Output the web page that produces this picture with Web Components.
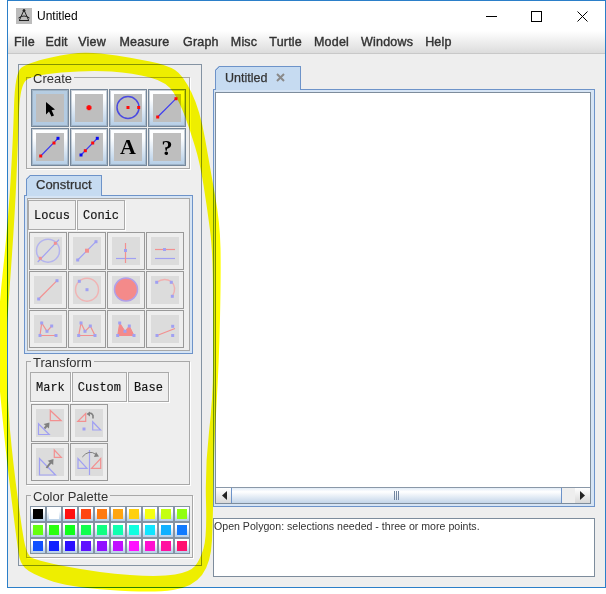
<!DOCTYPE html>
<html>
<head>
<meta charset="utf-8">
<title>Untitled</title>
<style>
  html, body { margin: 0; background: #fff; }
  body { width: 606px; height: 594px; overflow: hidden; position: relative; font-family: "Liberation Sans", Arial, sans-serif; }
</style>
</head>
<body>
<sketch-window>
  <title-bar slot="title" label="Untitled"></title-bar>
  <menu-bar slot="menu" items="File,Edit,View,Measure,Graph,Misc,Turtle,Model,Windows,Help"></menu-bar>

  <tool-panel slot="tools">
    <tool-group label="Create" style="width:164px;margin-top:12px">
      <tool-grid icons="arrow,point,circle,segment,ray,line,text,help" active="0"></tool-grid>
    </tool-group>

    <tab-pane label="Construct" style="margin-top:6px">
      <text-buttons items="Locus,Conic"></text-buttons>
      <tool-grid dim style="margin:2px 0 0 1px" icons="intersect,midpoint,perp,parallel,seg2,circlePt,disk,arc,openPoly,closedPoly,filledPoly,bisector"></tool-grid>
    </tab-pane>

    <tool-group label="Transform" style="width:164px;margin-top:7px" tight>
      <text-buttons items="Mark,Custom,Base"></text-buttons>
      <tool-grid dim style="margin:2px 0 0 1px" icons="translate,rotate,dilate,reflect" cols="2"></tool-grid>
    </tool-group>

    <tool-group label="Color Palette" style="width:167px;margin-top:10px" tight>
      <color-palette></color-palette>
    </tool-group>
  </tool-panel>

  <doc-area slot="doc" label="Untitled"></doc-area>
  <message-box slot="doc">Open Polygon: selections needed - three or more points.</message-box>
</sketch-window>
<yellow-scribble></yellow-scribble>

<script>
const BLUE = "#3c3cf0", RED = "#ff0a0a";
const LB = "#a0a0f2", PK = "#f29090";

const sq = (x, y, c, s = 3) => `<rect x="${x - s / 2}" y="${y - s / 2}" width="${s}" height="${s}" fill="${c}"/>`;
const ln = (x1, y1, x2, y2, c, w = 1.2) => `<line x1="${x1}" y1="${y1}" x2="${x2}" y2="${y2}" stroke="${c}" stroke-width="${w}"/>`;
const poly = (pts, c, w = 1.2, fill = "none") => `<polygon points="${pts}" fill="${fill}" stroke="${c}" stroke-width="${w}"/>`;
const open = (pts, c, w = 1.2) => `<polyline points="${pts}" fill="none" stroke="${c}" stroke-width="${w}"/>`;
const dots = (pts) => pts.map(p => sq(p[0], p[1], LB)).join("");
const moveArrow = (x1, y1, x2, y2) => {
  // thick grey arrow used by the transform tools
  const a = Math.atan2(y2 - y1, x2 - x1), h = 4;
  const p = (d, s) => `${x2 + Math.cos(a) * d - Math.sin(a) * s},${y2 + Math.sin(a) * d + Math.cos(a) * s}`;
  return ln(x1, y1, x2 - Math.cos(a) * 3, y2 - Math.sin(a) * 3, "#808080", 2) +
    `<polygon points="${p(0, 0)} ${p(-h - 1, h - 0.5)} ${p(-h - 1, -h + 0.5)}" fill="#808080"/>`;
};
const glyph = (t, y) => `<text x="14" y="${y}" text-anchor="middle" font-family="Liberation Serif, serif" font-weight="700" font-size="22" fill="#000">${t}</text>`;

const ICONS = {
  arrow: `<polygon points="10,8 10,20.5 13,17.5 15.5,22.5 18,21.5 15.6,16.2 19,15.6" fill="#000"/>`,
  point: `<rect x="11.5" y="12.2" width="5" height="3" fill="${RED}"/><rect x="12.5" y="11.2" width="3" height="5" fill="${RED}"/>`,
  circle: `<circle cx="14" cy="13.5" r="11" fill="none" stroke="#4a4ae0" stroke-width="1.5"/>` + sq(14, 13.5, RED, 3) + sq(24.7, 13.5, RED, 3),
  segment: ln(4.7, 23, 23, 4.7, BLUE) + sq(4.7, 23, RED) + sq(23, 4.7, RED),
  ray: ln(4.7, 23, 22, 5.3, BLUE) + sq(4.7, 23, RED) + sq(18, 10, RED) + sq(22, 5.3, "#0a0af0"),
  line: ln(6, 22, 22.3, 5.3, BLUE) + sq(6, 22, "#0a0af0") + sq(10.3, 17.7, RED) + sq(17.7, 10, RED) + sq(22.3, 5.3, "#0a0af0"),
  text: glyph("A", 21),
  help: glyph("?", 21.5),

  intersect: `<circle cx="14" cy="13.7" r="11.5" fill="none" stroke="#b4b4ee" stroke-width="1.5"/>` + ln(3.7, 25, 25, 2.7, LB) + sq(21.3, 6.3, PK) + sq(6.3, 21.3, PK),
  midpoint: ln(4.7, 23, 23, 4.7, LB) + dots([[4.7, 23], [23, 4.7]]) + sq(14, 13.7, PK, 4),
  perp: ln(4, 21.5, 24, 21.5, LB) + ln(13.5, 6, 13.5, 26, PK) + sq(13.5, 13.5, LB),
  parallel: ln(4, 12.5, 24, 12.5, PK) + ln(4, 21.5, 24, 21.5, LB) + sq(13.5, 12.5, LB),
  seg2: ln(4.7, 23, 23, 4.7, PK) + dots([[4.7, 23], [23, 4.7]]),
  circlePt: `<circle cx="14" cy="13.7" r="11.5" fill="none" stroke="#f0b4b4" stroke-width="1.5"/>` + dots([[14, 13.7], [6.3, 5.3]]),
  disk: `<circle cx="14" cy="13.5" r="11.5" fill="#f48a8a" stroke="#b0a0ea" stroke-width="1.5"/>`,
  arc: `<path d="M5.7 6.3Q13 1 20.3 5.5Q26.5 11.5 21.3 20.3" fill="none" stroke="#f0b0b0" stroke-width="1.4"/>` + dots([[5.7, 6.3], [20.3, 6.3], [21.3, 20.3]]),
  openPoly: open("22,20.5 6,20.5 7.7,8 13,16.3 17.7,11", PK) + dots([[6, 20.5], [22, 20.5], [7.7, 8], [13, 16.3], [17.7, 11]]),
  closedPoly: poly("5.7,20.5 8,8 12,16.3 17.3,11 22,20.5", PK) + dots([[5.7, 20.5], [22, 20.5], [8, 8], [12, 16.3], [17.3, 11]]),
  filledPoly: poly("5.7,20.5 7.7,8 13,16.3 17.3,11 22,20.5", "#f48a8a", 1, "#f48a8a") + dots([[5.7, 20.5], [22, 20.5], [7.7, 8], [13, 16.3], [17.3, 11]]),
  bisector: ln(6, 20.5, 24, 13.5, PK) + dots([[6, 20.5], [21.7, 20.5], [21.7, 11.3]]),

  translate: poly("14.3,1.5 14.3,11.7 25.2,11.7", PK) + poly("2.5,14.8 2.5,25.5 13.2,25.5", LB) + moveArrow(8.5, 19.5, 13.5, 13.5),
  rotate: poly("10.7,4.5 10.7,12.3 2.8,12.3", PK) + poly("17.7,12.8 17.7,21 25.6,21", LB) + sq(9, 20, LB) +
    `<path d="M13 5Q16.5 3 18 6.5L18 9.5" fill="none" stroke="#808080" stroke-width="1.6"/><polygon points="11.5,5 15,2.5 15,7.5" fill="#808080"/>`,
  dilate: poly("18.3,2 18.3,9.3 25.3,9.3", PK) + poly("3.5,10.5 3.5,27 19.5,27", LB) + moveArrow(10.5, 20, 17.5, 11),
  reflect: ln(14.5, 2, 14.5, 27, LB) + poly("3,10.5 3,20.3 12,20.3", LB) + poly("25.7,10.5 25.7,20.3 16.5,20.3", PK) +
    `<path d="M7.3 9Q14 1 21 6.5" fill="none" stroke="#808080" stroke-width="1"/><polygon points="24,8.5 19,9 21,4" fill="#808080"/>`
};

class SketchWindow extends HTMLElement {
  constructor() {
    super();
    this.attachShadow({ mode: "open" }).innerHTML = `
      <style>
        :host {
          display: flex;
          flex-direction: column;
          box-sizing: border-box;
          width: 599px;
          height: 588px;
          margin-left: 7px;
          border: 1px solid #2b7fc9;
          background: #eee;
        }
        .body { flex: 1; display: flex; gap: 11px; padding: 10px 0 0 10px; min-height: 0; }
        .doc { display: flex; flex-direction: column; padding-top: 2px; }
      </style>
      <slot name="title"></slot>
      <slot name="menu"></slot>
      <div class="body">
        <slot name="tools"></slot>
        <div class="doc"><slot name="doc"></slot></div>
      </div>`;
  }
}

class TitleBar extends HTMLElement {
  constructor() {
    super();
    this.attachShadow({ mode: "open" });
  }
  connectedCallback() {
    this.shadowRoot.innerHTML = `
      <style>
        :host { display: flex; align-items: center; height: 30px; background: #fff; padding-left: 8px; }
        .icon { width: 16px; height: 16px; background: #bcbcbc; display: block; }
        .text { font-size: 12px; color: #000; margin-left: 5px; flex: 1; }
        .ctrl { width: 45.5px; height: 30px; display: flex; align-items: center; justify-content: center; }
      </style>
      <svg class="icon" viewBox="0 0 16 16" fill="none" stroke="#222" stroke-width="1">
        <path d="M8 2L3.5 12M8 2L12.5 12M2.5 10Q8 6 13.5 10M3 12.5L13 12.5"/><circle cx="8" cy="2.5" r="1" fill="#222"/>
      </svg>
      <span class="text">${this.getAttribute("label")}</span>
      <span class="ctrl"><svg width="11" height="11" viewBox="0 0 11 11"><path d="M0 5.5H11" stroke="#000"/></svg></span>
      <span class="ctrl"><svg width="11" height="11" viewBox="0 0 11 11"><rect x=".5" y=".5" width="10" height="10" fill="none" stroke="#000"/></svg></span>
      <span class="ctrl"><svg width="11" height="11" viewBox="0 0 11 11"><path d="M.5 .5L10.5 10.5M10.5 .5L.5 10.5" stroke="#000"/></svg></span>`;
  }
}

class MenuBar extends HTMLElement {
  constructor() {
    super();
    this.attachShadow({ mode: "open" });
  }
  connectedCallback() {
    const items = this.getAttribute("items").split(",");
    // small nudges: the first items sit closer together than the later ones
    const nudge = [-1.5, -1.5, 1.5, 1.5];
    this.shadowRoot.innerHTML = `
      <style>
        :host {
          display: flex;
          align-items: center;
          gap: 12px;
          box-sizing: border-box;
          height: 23px;
          padding: 0 0 0 6px;
          background: linear-gradient(#fff, #dcdcdc);
          border-bottom: 1px solid #c8c8c8;
          font: 12.5px "Liberation Sans", Arial, sans-serif;
          letter-spacing: .2px;
          -webkit-text-stroke: .4px #333;
          color: #333;
        }
      </style>
      ${items.map((i, n) => `<span style="margin-right:${nudge[n] || 0}px">${i}</span>`).join("")}`;
  }
}

class ToolPanel extends HTMLElement {
  constructor() {
    super();
    this.attachShadow({ mode: "open" }).innerHTML = `
      <style>
        :host {
          display: block;
          box-sizing: border-box;
          width: 184px;
          height: 502px;
          padding: 0 0 0 7px;
          border: 1px solid #8493a3;
          flex: none;
        }
      </style>
      <slot></slot>`;
  }
}

class ToolGroup extends HTMLElement {
  constructor() {
    super();
    this.attachShadow({ mode: "open" });
  }
  connectedCallback() {
    const tight = this.hasAttribute("tight");
    this.shadowRoot.innerHTML = `
      <style>
        :host {
          display: block;
          box-sizing: border-box;
          border: 1px solid #a8a8a8;
          box-shadow: 1px 1px 0 #fff;
          padding: 0 3px ${tight ? 3 : 2}px ${tight ? 3 : 4}px;
        }
        .label {
          display: table;
          margin: -7px 0 ${tight ? 2 : 3}px ${tight ? 1 : 0}px;
          padding: 0 2px;
          background: #eee;
          font: 13px/15px "Liberation Sans", Arial, sans-serif;
          color: #333;
        }
      </style>
      <div class="label">${this.getAttribute("label")}</div>
      <slot></slot>`;
  }
}

class TabPane extends HTMLElement {
  constructor() {
    super();
    this.attachShadow({ mode: "open" });
  }
  connectedCallback() {
    this.shadowRoot.innerHTML = `
      <style>
        :host { display: block; margin-left: -2px; width: 169px; }
        .tab {
          box-sizing: border-box;
          width: 76px;
          height: 21px;
          margin: 0 0 -1px 2px;
          padding: 1px 0 0 9px;
          background: linear-gradient(135deg, #6d93c9 3.8px, #c6dbf1 3.8px) border-box;
          border: 1px solid #6d93c9;
          border-bottom: 0;
          clip-path: polygon(4px 0, 100% 0, 100% 100%, 0 100%, 0 4px);
          font: 13px/16px "Liberation Sans", Arial, sans-serif;
          -webkit-text-stroke: .25px #333;
          color: #333;
          position: relative;
        }
        .pane {
          box-sizing: border-box;
          height: 159px;
          padding: 2px;
          border: 1px solid #6d93c9;
          background: #d6e4f4;
        }
        .inner {
          box-sizing: border-box;
          height: 100%;
          width: 163px;
          padding: 1px 0 0 0;
          border: 1px solid #a8a8a8;
          background: #eee;
        }
      </style>
      <div class="tab">${this.getAttribute("label")}</div>
      <div class="pane"><div class="inner"><slot></slot></div></div>`;
  }
}

class TextButtons extends HTMLElement {
  constructor() {
    super();
    this.attachShadow({ mode: "open" });
  }
  connectedCallback() {
    const items = this.getAttribute("items").split(",");
    this.shadowRoot.innerHTML = `
      <style>
        :host { display: flex; gap: 1px; }
        span {
          display: flex;
          align-items: center;
          height: 30px;
          box-sizing: border-box;
          padding: 1px 5px 0;
          border: 1px solid #aaa;
          box-shadow: 1px 1px 0 #fff;
          font: 12px "Liberation Mono", "Courier New", monospace;
          -webkit-text-stroke: .15px #111;
          color: #111;
          background: #eee;
        }
      </style>
      ${items.map(i => `<span>${i}</span>`).join("")}`;
  }
}

class ToolGrid extends HTMLElement {
  constructor() {
    super();
    this.attachShadow({ mode: "open" });
  }
  connectedCallback() {
    const names = this.getAttribute("icons").split(",");
    const active = this.getAttribute("active");
    const dim = this.hasAttribute("dim");
    const cols = this.getAttribute("cols") || 4;
    this.shadowRoot.innerHTML = `
      <style>
        :host { display: grid; grid-template-columns: repeat(${cols}, 38px); grid-auto-rows: 38px; gap: 1px; }
        .btn {
          box-sizing: border-box;
          border: 1px solid #75879a;
          box-shadow: inset 0 0 0 1px rgba(125, 140, 156, .4);
          padding: 4px;
          background: linear-gradient(#fdfeff 25%, #b4cde6);
        }
        .btn.on { background: linear-gradient(#b6cde2, #b2cae2); }
        .btn svg { display: block; width: 28px; height: 28px; background: #bebebe; }
        :host([dim]) .btn { border-color: #999; box-shadow: none; background: #eee; }
        :host([dim]) .btn svg { background: #dcdcdc; }
      </style>
      ${names.map((n, i) => `<div class="btn${!dim && String(i) === active ? " on" : ""}"><svg viewBox="0 0 28 28">${ICONS[n]}</svg></div>`).join("")}`;
  }
}

class ColorPalette extends HTMLElement {
  constructor() {
    super();
    this.attachShadow({ mode: "open" });
  }
  connectedCallback() {
    const colors = [
      "#000000", "#ffffff", "#ff1010", "#ff4510", "#ff7a10", "#ffa510", "#ffd010", "#f5ff10", "#c4ff10", "#90ff10",
      "#66ff10", "#2aff10", "#10ff1a", "#10ff4f", "#10ff82", "#10ffb0", "#10ffe0", "#10e4ff", "#10b0ff", "#107aff",
      "#1050ff", "#1020ff", "#2a10ff", "#6010ff", "#9010ff", "#c010ff", "#ff10ff", "#ff10d0", "#ff10a0", "#ff1070"
    ];
    this.shadowRoot.innerHTML = `
      <style>
        :host { display: grid; grid-template-columns: repeat(10, 16px); grid-auto-rows: 16px; }
        div {
          box-sizing: border-box;
          border: 1px solid #8493a3;
          padding: 2px;
          background: linear-gradient(#fdfeff 30%, #b4cde6);
        }
        i { display: block; width: 10px; height: 10px; }
      </style>
      ${colors.map(c => `<div><i style="background:${c}"></i></div>`).join("")}`;
  }
}

class DocArea extends HTMLElement {
  constructor() {
    super();
    this.attachShadow({ mode: "open" });
  }
  connectedCallback() {
    this.shadowRoot.innerHTML = `
      <style>
        :host { display: block; width: 382px; }
        .tab {
          box-sizing: border-box;
          display: flex;
          align-items: center;
          gap: 9px;
          width: 86px;
          height: 24px;
          margin: 0 0 -1px 2px;
          padding: 0 0 2px 9px;
          background: linear-gradient(135deg, #6d93c9 3.8px, #c6dbf1 3.8px) border-box;
          border: 1px solid #6d93c9;
          border-bottom: 0;
          clip-path: polygon(4px 0, 100% 0, 100% 100%, 0 100%, 0 4px);
          font: 12.5px "Liberation Sans", Arial, sans-serif;
          -webkit-text-stroke: .25px #333;
          color: #333;
          position: relative;
        }
        .pane {
          box-sizing: border-box;
          height: 418px;
          padding: 2px 3px 2px 1px;
          border: 1px solid #6d93c9;
          background: #d6e4f4;
        }
        .view {
          box-sizing: border-box;
          height: 100%;
          display: flex;
          flex-direction: column;
          border: 1px solid #7d8c9c;
          background: #fff;
        }
        .canvas { flex: 1; }
      </style>
      <div class="tab">
        <span>${this.getAttribute("label")}</span>
        <svg width="9" height="9" viewBox="0 0 9 9"><path d="M1 1L8 8M8 1L1 8" stroke="#8a8a8a" stroke-width="2"/></svg>
      </div>
      <div class="pane">
        <div class="view">
          <div class="canvas"></div>
          <scroll-bar></scroll-bar>
        </div>
      </div>`;
  }
}

class ScrollBar extends HTMLElement {
  constructor() {
    super();
    this.attachShadow({ mode: "open" }).innerHTML = `
      <style>
        :host { display: flex; height: 15px; background: #eee; border-top: 1px solid #8a98a8; }
        .end {
          width: 15px;
          display: flex;
          align-items: center;
          justify-content: center;
          background: linear-gradient(#fff, #d8d8d8);
          box-sizing: border-box;
        }
        .thumb {
          flex: 1;
          display: flex;
          align-items: center;
          justify-content: center;
          background: linear-gradient(#e2ecf7, #fff 25%, #c3d5e9);
          border-left: 1px solid #6d93c9;
          border-right: 1px solid #6d93c9;
        }
        .track { width: 13px; }
      </style>
      <div class="end"><svg width="6" height="9"><path d="M6 0V9L1 4.5Z" fill="#222"/></svg></div>
      <div class="thumb"><svg width="6" height="9"><path d="M.5 0V9M2.5 0V9M4.5 0V9" stroke="#7386a0"/></svg></div>
      <div class="track"></div>
      <div class="end"><svg width="6" height="9"><path d="M0 0V9L5 4.5Z" fill="#222"/></svg></div>`;
  }
}

class MessageBox extends HTMLElement {
  constructor() {
    super();
    this.attachShadow({ mode: "open" }).innerHTML = `
      <style>
        :host {
          display: block;
          box-sizing: border-box;
          width: 382px;
          height: 59px;
          margin-top: 11px;
          padding: 1px 0 0 0;
          background: #fff;
          border: 1px solid #7d8c9c;
          font: 10.6px/13px "Liberation Sans", Arial, sans-serif;
          color: #333;
        }
      </style>
      <slot></slot>`;
  }
}

// hand drawn marker ring that lies over the tool panel
class YellowScribble extends HTMLElement {
  constructor() {
    super();
    this.attachShadow({ mode: "open" });
  }
  connectedCallback() {
    const outer = [[73,52.5],[100,53],[133,58],[167,65],[183,75],[200,110],[210,167],[220,223],[221,273],[219,363],[214,447],[213,517],[211,563],[193,587],[153,593],[67,587],[30,573],[20,563],[17,543],[7,463],[2,413],[-2,370],[-2,317],[8,223],[13,140],[15,73],[27,63]];
    const inner = [[20,85],[33,75],[90,70],[133,73],[167,82],[180,103],[190,130],[200,163],[207,207],[213,253],[213,340],[213,397],[205,467],[207,537],[200,560],[190,572],[160,577],[100,573],[33,560],[27,553],[23,537],[13,463],[7,397],[7,330],[8,310],[15,213],[18,140]];
    const smooth = (pts) => {
      const mid = (a, b) => [(a[0] + b[0]) / 2, (a[1] + b[1]) / 2];
      let d = "M" + mid(pts[pts.length - 1], pts[0]).join(" ");
      pts.forEach((p, i) => {
        const m = mid(p, pts[(i + 1) % pts.length]);
        d += `Q${p[0]} ${p[1]} ${m[0]} ${m[1]}`;
      });
      return d + "Z";
    };
    this.shadowRoot.innerHTML = `
      <style>
        :host { position: absolute; inset: 0; mix-blend-mode: multiply; pointer-events: none; }
        svg { display: block; }
      </style>
      <svg width="606" height="594" viewBox="0 0 606 594">
        <path d="${smooth(outer)}${smooth(inner)}" fill="#ffff00" fill-rule="evenodd"/>
      </svg>`;
  }
}

customElements.define("sketch-window", SketchWindow);
customElements.define("title-bar", TitleBar);
customElements.define("menu-bar", MenuBar);
customElements.define("tool-panel", ToolPanel);
customElements.define("tool-group", ToolGroup);
customElements.define("tab-pane", TabPane);
customElements.define("text-buttons", TextButtons);
customElements.define("tool-grid", ToolGrid);
customElements.define("color-palette", ColorPalette);
customElements.define("doc-area", DocArea);
customElements.define("scroll-bar", ScrollBar);
customElements.define("message-box", MessageBox);
customElements.define("yellow-scribble", YellowScribble);
</script>
</body>
</html>
